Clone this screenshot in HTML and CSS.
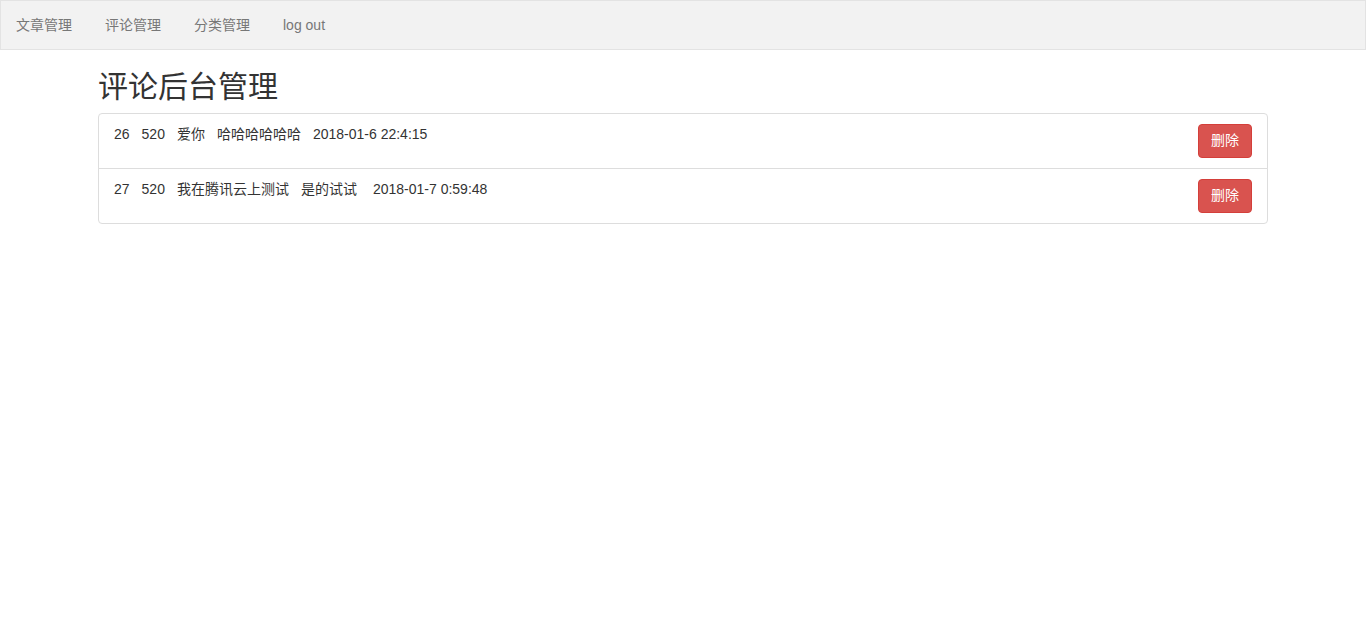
FILE: index.html
```html
<!DOCTYPE html>
<html lang="zh-CN">
<head>
    <meta charset="UTF-8">
    <meta name="viewport" content="width=device-width, initial-scale=1.0">
    <title>评论后台管理</title>
    <link rel="stylesheet" href="styles.css">
</head>
<body>
    <nav class="navbar">
        <ul class="nav">
            <li><a href="#">文章管理</a></li>
            <li><a href="#">评论管理</a></li>
            <li><a href="#">分类管理</a></li>
            <li><a href="#">log out</a></li>
        </ul>
    </nav>

    <div class="container">
        <h2>评论后台管理</h2>
        <ul class="list-group">
            <li class="list-group-item">
                <button class="btn-danger">删除</button>
                <span class="cell">26</span><span class="cell">520</span><span class="cell">爱你</span><span class="cell">哈哈哈哈哈哈</span><span class="cell">2018-01-6 22:4:15</span>
            </li>
            <li class="list-group-item">
                <button class="btn-danger">删除</button>
                <span class="cell">27</span><span class="cell">520</span><span class="cell">我在腾讯云上测试</span><span class="cell wide">是的试试</span><span class="cell">2018-01-7 0:59:48</span>
            </li>
        </ul>
    </div>
</body>
</html>
```

FILE: styles.css
```css
body {
    margin: 0;
    font-family: "Liberation Sans", "Noto Sans CJK SC", sans-serif;
    font-size: 14px;
    line-height: 1.42857;
    color: #333;
    background-color: #fff;
}
.navbar {
    height: 48px;
    background-color: #f2f2f2;
    border: 1px solid #e3e3e3;
    margin-bottom: 20px;
}
.nav {
    list-style: none;
    margin: 0;
    padding: 0;
    display: flex;
    gap: 3px;
}
.nav a {
    display: block;
    padding: 15px 15px 13px;
    color: #777;
    text-decoration: none;
}
.container {
    width: 1170px;
    margin: 0 auto;
}
h2 {
    margin: 20px 0 10px;
    font-size: 30px;
    font-weight: 400;
    line-height: 1.1;
}
.list-group {
    list-style: none;
    margin: 0 0 20px;
    padding: 0;
}
.list-group-item {
    padding: 10px 15px;
    border: 1px solid #ddd;
    margin-bottom: -1px;
}
.list-group-item:first-child {
    border-radius: 4px 4px 0 0;
}
.list-group-item:last-child {
    border-radius: 0 0 4px 4px;
    margin-bottom: 0;
}
.list-group-item::after {
    content: "";
    display: block;
    clear: both;
}
.cell {
    position: relative;
    top: 1px;
    margin-right: 12px;
}
.cell.wide {
    margin-right: 16px;
}
.btn-danger {
    float: right;
    font-family: inherit;
    font-size: 14px;
    line-height: 1.42857;
    padding: 6px 12px;
    color: #fff;
    background-color: #d9534f;
    border: 1px solid #d43f3a;
    border-radius: 4px;
    cursor: pointer;
}
```
